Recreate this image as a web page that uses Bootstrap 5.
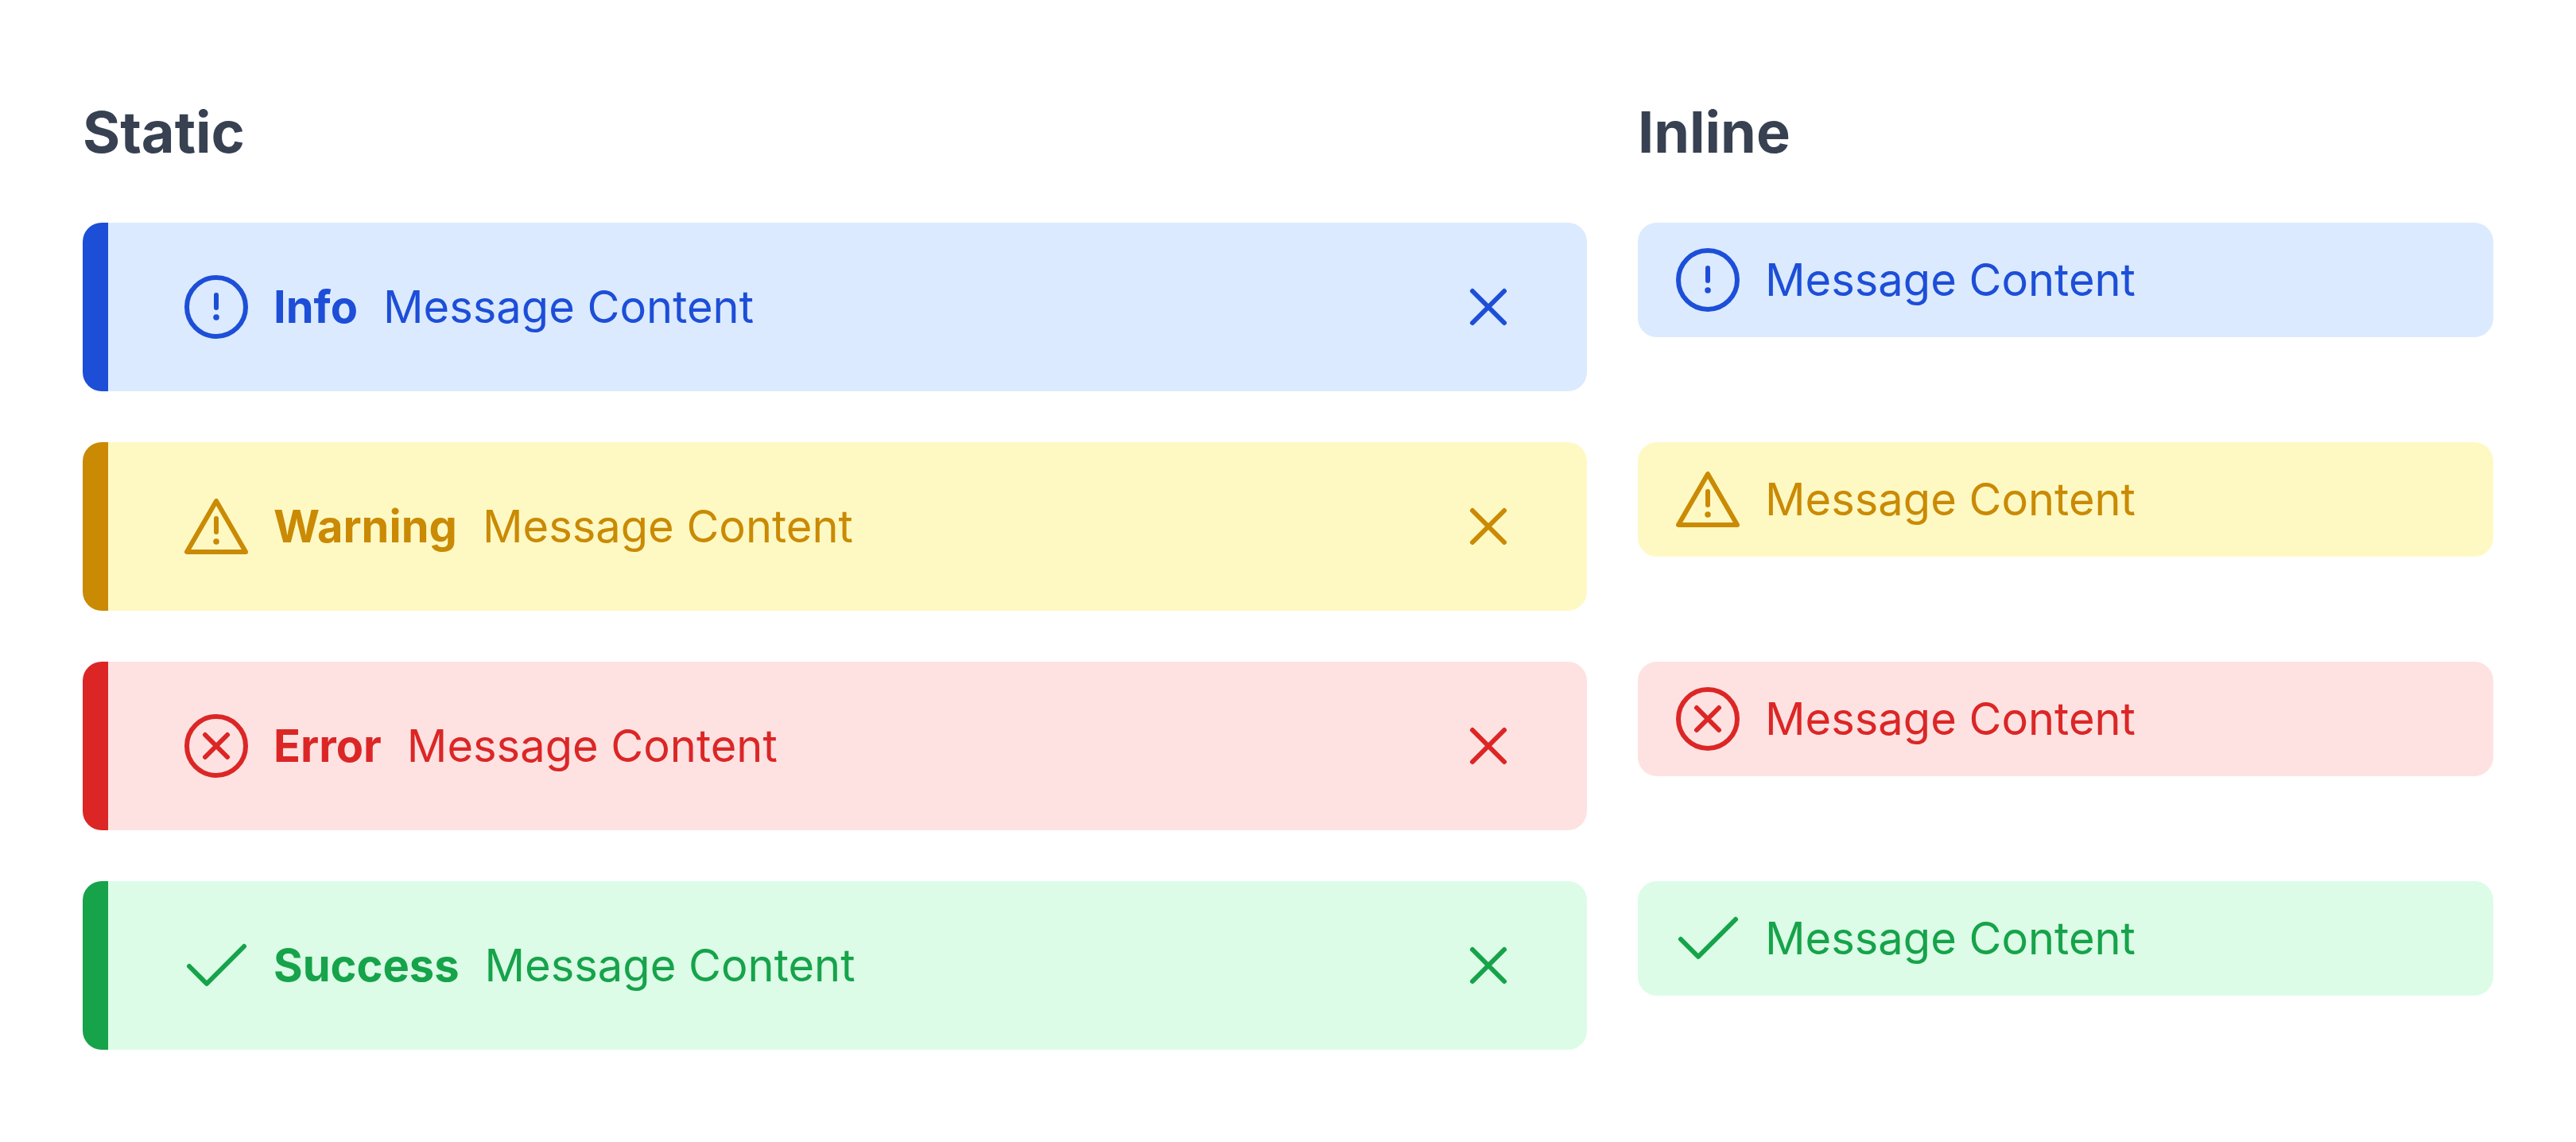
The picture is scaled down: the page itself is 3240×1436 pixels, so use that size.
<!DOCTYPE html>
<html lang="en">
<head>
<meta charset="utf-8">
<title>Alerts</title>
<link href="https://cdn.jsdelivr.net/npm/bootstrap@5.3.0/dist/css/bootstrap.min.css" rel="stylesheet">
<style>
body { background:#fff; font-family:"Inter","Liberation Sans",sans-serif; font-size:56px; line-height:1.5; }
.board { display:grid; grid-template-columns:1892px 1076px; column-gap:64px; padding:112px 0 0 104px; align-items:start; }
.col-title { font-size:72px; font-weight:700; line-height:108px; color:#374151; margin:0 0 60px; }
.note { border-radius:24px; margin-bottom:64px; }
.note-static { padding:64px 84px 64px 96px; border-left:32px solid currentColor; }
.note-inline { padding:30px 48px; }
.note svg { display:block; flex:none; width:80px; height:80px; fill:none; stroke:currentColor; stroke-width:6; stroke-linecap:round; stroke-linejoin:round; }
.note-gap { gap:32px; }
.note-label { font-weight:700; }
.note-close { color:inherit; background:none; border:0; padding:0; line-height:0; }
.tone-info { color:#1d4ed8; background:#dbeafe; }
.tone-warn { color:#ca8a04; background:#fef9c3; }
.tone-error { color:#dc2626; background:#fee2e2; }
.tone-ok { color:#16a34a; background:#dcfce7; }
</style>
</head>
<body>
<svg width="0" height="0" class="position-absolute">
  <defs>
    <g id="i-info"><circle cx="40" cy="40" r="37"/><path d="M40 25V41"/><path d="M40 53h.01" stroke-width="7.5"/></g>
    <g id="i-warn"><path d="M40 8 3 72H77Z"/><path d="M40 30V47"/><path d="M40 59h.01" stroke-width="7.5"/></g>
    <g id="i-error"><circle cx="40" cy="40" r="37"/><path d="M26 26 54 54M54 26 26 54"/></g>
    <g id="i-ok"><path d="M6 41 28 63 75 16"/></g>
    <g id="i-close"><path d="M21 19 61 59M61 19 21 59" transform="translate(-1 1)"/></g>
  </defs>
</svg>
<main class="board">
  <h2 class="col-title">Static</h2>
  <h2 class="col-title">Inline</h2>

  <div class="note note-static tone-info d-flex align-items-center note-gap">
    <svg viewBox="0 0 80 80"><use href="#i-info"/></svg>
    <div class="note-gap d-flex flex-grow-1"><span class="note-label">Info</span><span>Message Content</span></div>
    <button class="note-close" type="button" aria-label="Close"><svg viewBox="0 0 80 80"><use href="#i-close"/></svg></button>
  </div>
  <div class="note note-inline tone-info d-flex align-items-center note-gap">
    <svg viewBox="0 0 80 80"><use href="#i-info"/></svg><span>Message Content</span>
  </div>

  <div class="note note-static tone-warn d-flex align-items-center note-gap">
    <svg viewBox="0 0 80 80"><use href="#i-warn"/></svg>
    <div class="note-gap d-flex flex-grow-1"><span class="note-label">Warning</span><span>Message Content</span></div>
    <button class="note-close" type="button" aria-label="Close"><svg viewBox="0 0 80 80"><use href="#i-close"/></svg></button>
  </div>
  <div class="note note-inline tone-warn d-flex align-items-center note-gap">
    <svg viewBox="0 0 80 80"><use href="#i-warn"/></svg><span>Message Content</span>
  </div>

  <div class="note note-static tone-error d-flex align-items-center note-gap">
    <svg viewBox="0 0 80 80"><use href="#i-error"/></svg>
    <div class="note-gap d-flex flex-grow-1"><span class="note-label">Error</span><span>Message Content</span></div>
    <button class="note-close" type="button" aria-label="Close"><svg viewBox="0 0 80 80"><use href="#i-close"/></svg></button>
  </div>
  <div class="note note-inline tone-error d-flex align-items-center note-gap">
    <svg viewBox="0 0 80 80"><use href="#i-error"/></svg><span>Message Content</span>
  </div>

  <div class="note note-static tone-ok d-flex align-items-center note-gap">
    <svg viewBox="0 0 80 80"><use href="#i-ok"/></svg>
    <div class="note-gap d-flex flex-grow-1"><span class="note-label">Success</span><span>Message Content</span></div>
    <button class="note-close" type="button" aria-label="Close"><svg viewBox="0 0 80 80"><use href="#i-close"/></svg></button>
  </div>
  <div class="note note-inline tone-ok d-flex align-items-center note-gap">
    <svg viewBox="0 0 80 80"><use href="#i-ok"/></svg><span>Message Content</span>
  </div>
</main>
<script src="https://cdn.jsdelivr.net/npm/bootstrap@5.3.0/dist/js/bootstrap.bundle.min.js"></script>
</body>
</html>
